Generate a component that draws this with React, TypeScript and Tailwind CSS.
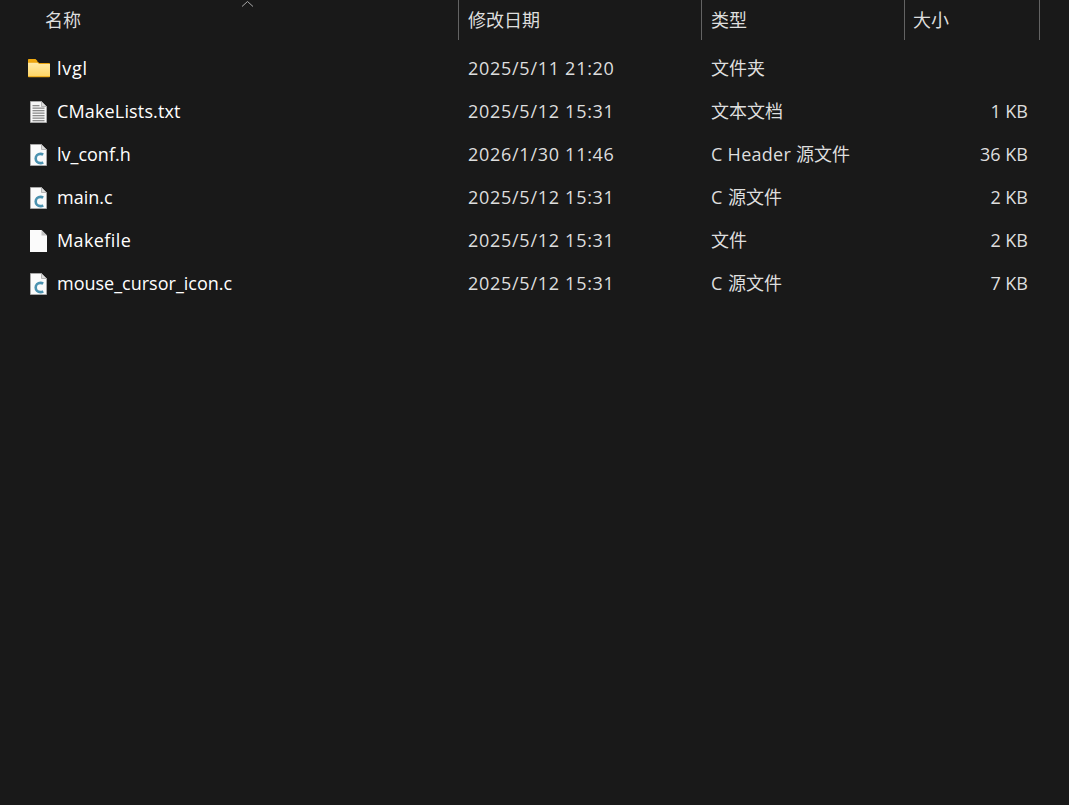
const FONT = "font-['Open_Sans','Noto_Sans_CJK_SC',sans-serif]";

function FolderIcon() {
  return (
    <svg width="24" height="20" viewBox="0 1 24 20">
      <defs>
        <linearGradient id="fg" x1="0" y1="0" x2="0" y2="1">
          <stop offset="0" stopColor="#ffeaa6" />
          <stop offset="1" stopColor="#ffd666" />
        </linearGradient>
      </defs>
      <path d="M1 5V2C1 1.4 1.4 1 2 1H8.5L10.8 3.2H10V5Z" fill="#f0a90f" />
      <path d="M1 3.5H10.5L12.2 5H22.2C22.7 5 23 5.3 23 5.8V18.6C23 19 22.7 19.3 22.3 19.3H1.7C1.3 19.3 1 19 1 18.6Z" fill="#e9a20d" />
      <path d="M1 4.8H10.5L12.2 6H23V18.3H1Z" fill="url(#fg)" />
    </svg>
  );
}

function Sheet({ children, fill = "#fbfbfb" }: { children?: React.ReactNode; fill?: string }) {
  return (
    <svg width="17" height="22" viewBox="0 0 17 22">
      <path d="M.5 .5H11.5L16.5 5.5V21.5H.5Z" fill={fill} stroke="#a8a8a8" strokeWidth="1" />
      <path d="M11.5 .5V5.5H16.5Z" fill="#dcdcdc" stroke="#a8a8a8" strokeWidth=".8" />
      {children}
    </svg>
  );
}

function TextIcon() {
  return (
    <Sheet fill="#f6f6f6">
      {[4, 6.5, 9, 11.5, 14, 16.5, 19].map((y, i) => (
        <rect key={y} x="2.5" y={y} width={i === 0 ? 7 : 12} height="1.3" fill="#8c8c8c" />
      ))}
    </Sheet>
  );
}

function CIcon() {
  return (
    <Sheet>
      <path d="M13.2 10.6C12.4 10.1 11.5 9.9 10.5 9.9 7.7 9.9 5.7 11.8 5.7 14.5S7.7 19.1 10.5 19.1C11.5 19.1 12.4 18.9 13.2 18.4" fill="none" stroke="#4b92b0" strokeWidth="2.6" />
    </Sheet>
  );
}

function BlankIcon() {
  return (
    <svg width="17" height="22" viewBox="0 0 17 22">
      <path d="M0 0H11.5L17 5.5V22H0Z" fill="#fbfbfb" />
      <path d="M11.5 0V5.5H17Z" fill="#c4c4c4" />
    </svg>
  );
}

const rows = [
  { icon: <FolderIcon />, inset: "ml-0", name: "lvgl", nameClass: "tracking-[0.7px]", date: "2025/5/11 21:20", type: "文件夹", size: "" },
  { icon: <TextIcon />, inset: "ml-[3px]", name: "CMakeLists.txt", nameClass: "tracking-[0.15px]", date: "2025/5/12 15:31", type: "文本文档", size: "1 KB" },
  { icon: <CIcon />, inset: "ml-[3px]", name: "lv_conf.h", nameClass: "", date: "2026/1/30 11:46", type: <><span className="tracking-[0.28px]">C Header </span>源文件</>, size: "36 KB" },
  { icon: <CIcon />, inset: "ml-[3px]", name: "main.c", nameClass: "", date: "2025/5/12 15:31", type: <><span className="mr-px">C </span>源文件</>, size: "2 KB" },
  { icon: <BlankIcon />, inset: "ml-[3px]", name: "Makefile", nameClass: "tracking-[0.4px]", date: "2025/5/12 15:31", type: "文件", size: "2 KB" },
  { icon: <CIcon />, inset: "ml-[3px]", name: "mouse_cursor_icon.c", nameClass: "", date: "2025/5/12 15:31", type: <><span className="mr-px">C </span>源文件</>, size: "7 KB" },
];

export default function App() {
  return (
    <div className={`relative min-h-[805px] w-full overflow-hidden bg-[#191919] ${FONT} text-[18px]`}>
      <svg className="absolute left-[241px] top-0" width="13" height="7" viewBox="0 0 13 7">
        <path d="M1 6.5L6.5 1.5L12 6.5" fill="none" stroke="#a8a8a8" strokeWidth="1" />
      </svg>
      <div className="flex h-10 text-[#dedede]">
        <div className="flex w-[459px] items-center border-r border-[#636363] pl-[45px]">名称</div>
        <div className="flex w-[243px] items-center border-r border-[#636363] pl-[9px]">修改日期</div>
        <div className="flex w-[203px] items-center border-r border-[#636363] pl-[9px]">类型</div>
        <div className="flex w-[135px] items-center border-r border-[#636363] pl-[8px]">大小</div>
      </div>
      <div className="flex flex-col pt-[7px]">
        {rows.map((r) => (
          <div key={r.name} className="flex h-[43px] items-center">
            <div className="flex w-[459px] items-center pl-[27px]">
              <div className="flex w-[30px] items-center">
                <div className={`flex ${r.inset}`}>{r.icon}</div>
              </div>
              <span className={`text-white ${r.nameClass}`}>{r.name}</span>
            </div>
            <div className="w-[243px] pl-[9px] tracking-[0.72px] text-[#dedede]">{r.date}</div>
            <div className="w-[203px] pl-[9px] text-[#dedede]">{r.type}</div>
            <div className="w-[123px] text-right text-[#dedede]">{r.size}</div>
          </div>
        ))}
      </div>
    </div>
  );
}
